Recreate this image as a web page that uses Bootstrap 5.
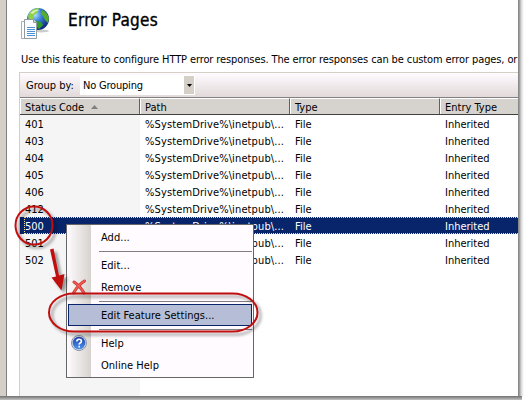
<!DOCTYPE html>
<html lang="en">
<head>
<meta charset="utf-8">
<title>Error Pages</title>
<link href="https://cdn.jsdelivr.net/npm/bootstrap@5.3.0/dist/css/bootstrap.min.css" rel="stylesheet">
<style>
body{width:528px;height:400px;background:#fff;color:#000;font:11px/17px "DejaVu Sans Condensed","DejaVu Sans",sans-serif;font-stretch:condensed;overflow:hidden}
.window{width:518px;height:396px}
.edge{width:7px;background:#d4d0c8;border-right:1px solid #808080}
.shade-r{width:10px;background:linear-gradient(90deg,#858585 0,#8c8c8c 1px,#b0b0b0 2px,#cfcfcf 3px,#e6e6e6 4px,#fff 6px)}
.shade-b{height:4px;width:522px;background:linear-gradient(#707070,#999 50%,#c4c4c4)}
.heading{height:72px;padding-left:13px}
.title-line{height:48px}
.title-line h1{font-size:17px;line-height:22px;margin:9px 0 0 16px;letter-spacing:.27px;-webkit-text-stroke:.35px #000}
.title-line svg{margin:7px 0 0 1px}
.intro{margin-left:1px;padding-top:3px;letter-spacing:-.11px}
.listing{margin-left:12px;border-left:1px solid #d4d0c8;height:324px}
.tools{height:25px;border-top:1px solid #d4d0c8;background:linear-gradient(#fffbff,#e2d9d9)}
.tools label{width:60px;padding-left:6px}
.picker{width:115px;height:20px;background:#fff;padding:0 1px 0 3px;letter-spacing:-.2px}
.picker>span:first-child{padding-top:1px}
.drop{width:10px;height:18px;background:#d4d0c8}
.line{display:grid;grid-template-columns:120px 150px 150px 78px;height:17px;line-height:19px;white-space:nowrap}
.line>span{padding-left:5px;overflow:hidden}
.rows .line>span:nth-child(2){letter-spacing:.12px}
.heads{height:18px;background:#d6d3ce;border-top:1px solid #808080;border-bottom:1px solid #404040}
.heads>span{border-left:1px solid #fff;border-top:1px solid #fff;border-right:1px solid #606060;padding-left:4px;line-height:17px}
.heads>span:first-child{letter-spacing:-.1px}
.heads>span:last-child{border-right:0}
.rows{background:linear-gradient(90deg,#f5f5f5 120px,#fff 120px);height:281px}
.picked{background:#08246b;color:#fff;position:relative}
.picked::after{content:"";position:absolute;inset:0 -2px 0 4px;border:1px dotted #f7db94}
.popup{position:absolute;left:66px;top:224px;width:188px;height:154px;border:1px solid #666;background:linear-gradient(90deg,#fffbff 0,#d6d3ce 24px,#fffbff 24px);padding:1px 1px 1px 0}
.entry{height:22px;line-height:23px;letter-spacing:.03px}
.entry>i{width:34px;height:22px;flex:none;font-style:normal}
.rule{height:6px;margin-left:32px;background:linear-gradient(transparent 3px,#808080 3px,#808080 4px,transparent 4px)}
.hot{margin-left:1px;border:1px solid #08246b;background:#b5bed6;line-height:21px}
.hot>i{width:32px}
.marks{position:absolute;left:0;top:0;filter:drop-shadow(3px 3px 1.5px rgba(0,0,0,.4))}
</style>
<script src="https://cdn.jsdelivr.net/npm/bootstrap@5.3.0/dist/js/bootstrap.bundle.min.js"></script>
</head>
<body class="position-relative">
<div class="d-flex">
<main class="window d-flex overflow-hidden">
 <div class="edge flex-shrink-0"></div>
 <div class="flex-grow-1 overflow-hidden">
  <header class="heading">
   <div class="title-line d-flex align-items-start">
    <svg width="31" height="34" viewBox="0 0 31 34">
     <defs><radialGradient id="sea" cx=".35" cy=".3" r=".75"><stop stop-color="#b9e6ff"/><stop offset=".4" stop-color="#3d86dc"/><stop offset="1" stop-color="#08246f"/></radialGradient></defs>
     <ellipse cx="20" cy="24" rx="8" ry="1.500" fill="#ccc"/>
     <circle cx="17" cy="12" r="11" fill="url(#sea)"/>
     <path d="M7 9q3-8 11-8l-2 5-3 2-1 4-4 1Z" fill="#8fd045"/>
     <path d="M21 3q5 2 7 8l-1 5-3-3-2-4-2-2Z" fill="#54ad2b"/><path d="M15 14l5 1 2 3-4 4-3-3Z" fill="#329b2d"/>
     <path d="M9 6q5-5 10-3-5 1-7 4Z" fill="#f3ffe0" opacity=".7"/>
     <path d="M.500 14.500h11v17H.500Z" fill="#fff" stroke="#a9b0b4"/>
     <path d="M3.500 12.500h9l3 3v16h-12Z" fill="#fafdff" stroke="#929b9e"/><path d="M12.500 12.500v3h3" fill="#ddd" stroke="#999"/>
     <path d="M6 20.500h8M6 22.500h8M6 24.500h8M6 26.500h8M6 28.500h8" stroke="#4d91d8"/>
    </svg>
    <h1>Error Pages</h1>
   </div>
   <p class="intro mb-0 text-nowrap">Use this feature to configure HTTP error responses. The error responses can be custom error pages, or</p>
  </header>
  <section class="listing">
   <div class="tools d-flex align-items-center">
    <label>Group by:</label>
    <div class="picker d-flex align-items-center justify-content-between"><span>No Grouping</span><span class="drop d-flex align-items-center justify-content-center"><svg width="5" height="3"><path d="M0 0h5L2.500 3Z"/></svg></span></div>
   </div>
   <div class="line heads"><span>Status Code <svg class="ms-1" width="7" height="8"><path d="M0 5h7L3.500 1Z" fill="#808080"/></svg></span><span>Path</span><span>Type</span><span>Entry Type</span></div>
   <div class="rows">
    <div class="line"><span>401</span><span>%SystemDrive%\inetpub\...</span><span>File</span><span>Inherited</span></div>
    <div class="line"><span>403</span><span>%SystemDrive%\inetpub\...</span><span>File</span><span>Inherited</span></div>
    <div class="line"><span>404</span><span>%SystemDrive%\inetpub\...</span><span>File</span><span>Inherited</span></div>
    <div class="line"><span>405</span><span>%SystemDrive%\inetpub\...</span><span>File</span><span>Inherited</span></div>
    <div class="line"><span>406</span><span>%SystemDrive%\inetpub\...</span><span>File</span><span>Inherited</span></div>
    <div class="line"><span>412</span><span>%SystemDrive%\inetpub\...</span><span>File</span><span>Inherited</span></div>
    <div class="line picked"><span>500</span><span>%SystemDrive%\inetpub\...</span><span>File</span><span>Inherited</span></div>
    <div class="line"><span>501</span><span>%SystemDrive%\inetpub\...</span><span>File</span><span>Inherited</span></div>
    <div class="line"><span>502</span><span>%SystemDrive%\inetpub\...</span><span>File</span><span>Inherited</span></div>
   </div>
  </section>
 </div>
</main>
<div class="shade-r"></div>
</div>
<div class="shade-b"></div>
<div class="popup">
 <div class="entry d-flex"><i></i>Add...</div>
 <div class="rule"></div>
 <div class="entry d-flex"><i></i>Edit...</div>
 <div class="entry d-flex"><i><svg class="d-block" width="24" height="22"><path d="M7 6q6 4 10 11M17.500 5Q11 9 6.500 17" fill="none" stroke="#b93432" stroke-width="3" stroke-linecap="round"/><path d="M7 6q6 4 10 11M17.500 5Q11 9 6.500 17" fill="none" stroke="#f4584f" stroke-width="1.700" stroke-linecap="round"/></svg></i>Remove</div>
 <div class="rule"></div>
 <div class="entry hot d-flex"><i></i>Edit Feature Settings...</div>
 <div class="rule"></div>
 <div class="entry d-flex"><i><svg class="d-block" width="24" height="22"><defs><linearGradient id="orb" x2="0" y2="1"><stop stop-color="#1a3fa8"/><stop offset="1" stop-color="#4d93ee"/></linearGradient></defs><circle cx="12" cy="11" r="7.500" fill="#d8dee8" stroke="#8a93a5"/><circle cx="12" cy="11" r="6.300" fill="url(#orb)"/><path d="M9.800 9.500q0-2.300 2.300-2.300t2.300 2q0 1.200-1.200 1.800t-1 1.700M12.200 13.800v1.600" fill="none" stroke="#fff" stroke-width="1.600"/></svg></i>Help</div>
 <div class="entry d-flex"><i></i>Online Help</div>
</div>
<svg class="marks" width="528" height="400">
 <ellipse cx="34" cy="225.500" rx="18.500" ry="19" fill="none" stroke="#c00f0f" stroke-width="2"/>
 <path d="M50 249.500l3.500-1 5.500 27 5.500-1.500-3 16.500-10-13 4.500-1Z" fill="#c00f0f"/>
 <rect x="49" y="293.500" width="208.500" height="38" rx="25" ry="19" fill="none" stroke="#c00f0f" stroke-width="2"/>
</svg>
</body>
</html>
